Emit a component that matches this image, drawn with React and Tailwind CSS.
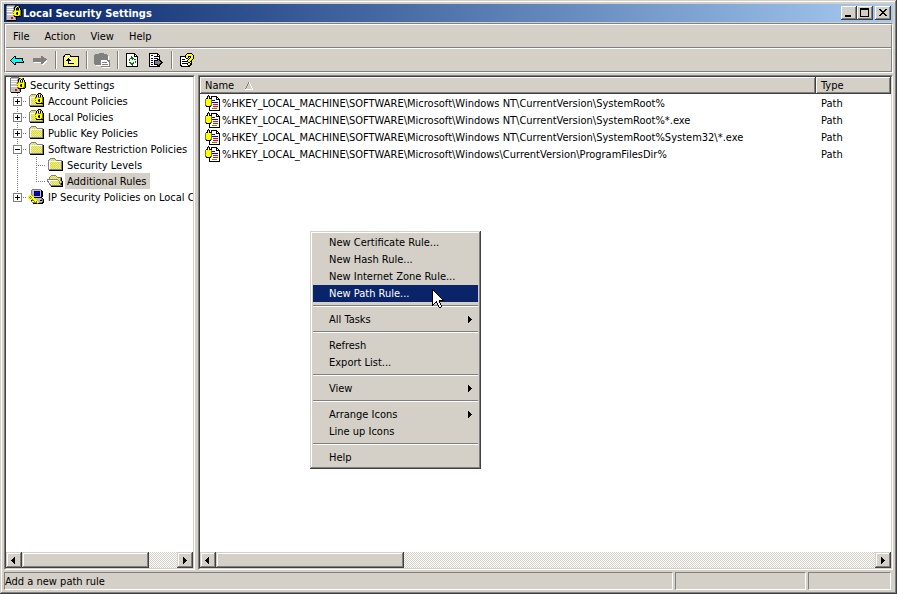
import { useState } from 'react';
import clsx from 'clsx';

const PALETTE = {
  k: '#000000',
  g: '#808080',
  l: '#c0c0c0',
  w: '#ffffff',
  y: '#ffff00',
  o: '#808000',
  r: '#ff0000',
  b: '#0000ff',
  n: '#000080',
  c: '#00ffff',
  e: '#008000',
};

// 'd', 'a' and 'f' are dithered fills: yellow on grey in both phases, yellow on white
function pixelColor(ch, x, y) {
  const odd = (x + y) % 2 === 1;
  if (ch === 'd') return odd ? '#ffff00' : '#c8c8c8';
  if (ch === 'a') return odd ? '#c8c8c8' : '#ffff00';
  if (ch === 'f') return odd ? '#ffff00' : '#ffffff';
  return PALETTE[ch];
}

function PixelIcon({ rows, className }) {
  const width = Math.max(...rows.map((r) => r.length));
  return (
    <svg
      width={width}
      height={rows.length}
      viewBox={`0 0 ${width} ${rows.length}`}
      shapeRendering="crispEdges"
      className={clsx('block shrink-0', className)}
      aria-hidden
    >
      {rows.flatMap((row, y) =>
        [...row].map((ch, x) => {
          const fill = pixelColor(ch, x, y);
          return fill ? (
            <rect key={`${x}-${y}`} x={x} y={y} width="1" height="1" fill={fill} />
          ) : null;
        })
      )}
    </svg>
  );
}

const ICONS = {
  server: [
    '.gggggggg.......',
    'glllllllgkoyok..',
    'gwwwwwwlkoykok..',
    'gllllllgkyk.kyk.',
    'gwwwwwwlkyk.kyk.',
    'gllllllooyoooyok',
    'gwwwwwloyyyyyyok',
    'gllllllyyyokyyok',
    'glllllloyykkyyok',
    'gwwwwwwyyyokyyok',
    'gllllllooyyyyook',
    'glllllllkkkkkkk.',
    'gllllrrllgk.....',
    'gllllrrllgk.....',
    'glllllllllk.....',
    '.kkkkkkkkk......',
  ],
  lockFolder: [
    '..........kkk...',
    '...ggggg.koyok..',
    '..gdddddkyk.kyk.',
    '.gddddddkyk.kyk.',
    '.gwwwwwooyoooyok',
    '.gwddddoyyyyyyok',
    '.gwddddyyyokyyok',
    '.gwddddoyykkyyok',
    '.gwddddyyyokyyok',
    '.gwddddooyyyyook',
    '.gwdddddkkkkkkkk',
    '.gwdddddddddddgk',
    '.ggggggggggggggk',
    '..kkkkkkkkkkkkkk',
    '................',
    '................',
  ],
  folder: [
    '................',
    '...ggggg........',
    '..gaaaaag.......',
    '.gaaaaaaagggggg.',
    '.gwwwwwwwwwwwwgk',
    '.gwaaaaaaaaaaagk',
    '.gwaaaaaaaaaaagk',
    '.gwaaaaaaaaaaagk',
    '.gwaaaaaaaaaaagk',
    '.gwaaaaaaaaaaagk',
    '.gwaaaaaaaaaaagk',
    '.gwaaaaaaaaaaagk',
    '.ggggggggggggggk',
    '..kkkkkkkkkkkkkk',
    '................',
    '................',
  ],
  openFolder: [
    '................',
    '................',
    '....ggggg.......',
    '...gdddddg......',
    '..gdddddddggggg.',
    '..gddddddddddgk.',
    'gggggggggggddgk.',
    'gwwwwwwwwwwgdgk.',
    'ggwdddddddddgdgk',
    '.gwdddddddddgdgk',
    '..gwddddddddggkk',
    '..ggwddddddddgkk',
    '...ggggggggggggk',
    '....kkkkkkkkkkkk',
    '................',
    '................',
  ],
  ipsec: [
    '....ggggggggg...',
    '...glllllllllk..',
    '...gllnnnnnnlkk.',
    '...gllnbbbbnlkk.',
    '...gllnbnnnnlkk.',
    '...gllnnnnnnlkk.',
    '.yyyglnnnnnnlkk.',
    'yyoyyllllllllkk.',
    'yo.oyykkkkkkkk..',
    'yyoyyyyllllllgk.',
    '.yyyoyyylllllggk',
    '...kooyyylllkkgk',
    '...gwwoyoyllllgk',
    '....ggggoyygggkk',
    '.....kkkkokkkkk.',
    '................',
  ],
  rule: [
    '...k............',
    '..kok.kkkkkk....',
    '..k.k.kwwwwkk...',
    '.kk.kkkwwwwkwk..',
    'oyyyyyowwwwkkkk.',
    'oydydyobbbwwwwk.',
    'oyydyyowwwwwwwk.',
    'oydydyobbbbbbwk.',
    'oyydyyowwwwwwwk.',
    'oydydyowrrrrrwk.',
    'ooyyyoowwwwwwwk.',
    '.kkkkkwwrrrrrwk.',
    '....kwwwwwwwwwk.',
    '....kwwooooowwk.',
    '....kwwwwwwwwwk.',
    '....kkkkkkkkkkk.',
  ],
  back: [
    '.....kk........',
    '....kck........',
    '...kcckkkkkkkk.',
    '..kcccccccccck.',
    '.kccccccccccck.',
    '..kccccccccccck',
    '...kcckkkkkkkkk',
    '....kck........',
    '.....kk........',
  ],
  forward: [
    '.........gg....',
    '.........ggg...',
    '.ggggggggggggg.',
    '.gggggggggggggg',
    '.gggggggggggggw',
    '.ggggggggggggww',
    '..wwwwwwwgggww.',
    '.........ggww..',
    '..........ww...',
  ],
  upFolder: [
    '..kkkkk.........',
    '.kfffffk........',
    'kkfffffkkkkkkkkk',
    'kffffffffffffffk',
    'kffffkfffffffffk',
    'kfffkkkffffffffk',
    'kffkkkkkfffffffk',
    'kffffkfffffffffk',
    'kffffkfffffffffk',
    'kffffkkkkkkffffk',
    'kffffffffffffffk',
    'kffffffffffffffk',
    'kkkkkkkkkkkkkkkk',
  ],
  paste: [
    '.....ggggg......',
    '.gggggggggggg...',
    'gggggggggggggg..',
    'ggggggggggggggw.',
    'ggggggggggggggw.',
    'ggggggggggggggw.',
    'ggggggggggggggw.',
    'gggggggwwwwwwggg',
    'gggggggwwwwwwwgg',
    'gggggggwgggggwwg',
    'gggggggwwwwwwwwg',
    '.ggggggwggggggwg',
    '..wwwwwwwwwwwwwg',
    '.......ggggggggg',
    '........wwwwwwww',
  ],
  refresh: [
    '.kkkkkkkkk...',
    '.kwwwwwwwkk..',
    '.kwwwwwwwkwk.',
    '.kwwwwewwkkkk',
    '.kwwwweewwwwk',
    '.kwwweeeewwwk',
    '.kwwewweweewk',
    '.kwwewwwwwwwk',
    '.kwwwwwwwwewk',
    '.kwweewwewewk',
    '.kwwweeeewwwk',
    '.kwwwweewwwwk',
    '.kwwwwwewwwwk',
    '.kkkkkkkkkkkk',
  ],
  exportList: [
    '.kkkkkkkkk.....',
    '.kwwwwwwwkk....',
    '.kwnnwwwwkwk...',
    '.kwwwwkkkkkk...',
    '.kwwwwwwwwwk...',
    '.kwnnwnnnkwk...',
    '.kwwwwwwwkkk...',
    '.kwnnwkkkkgkk..',
    '.kwwwwkgggggkk.',
    '.kwnnwkggggggkk',
    '.kwwwwkgggggkk.',
    '.kwnnwkkkkgkk..',
    '.kwwwwwwwkkk...',
    '.kkkkkkkkkkk...',
  ],
  help: [
    '........kkkkk..',
    '.......kyyyyyk.',
    '......kyyyyyyyk',
    '.kkkkkkyykkkyyk',
    '.kwwwwkyyk.kyyk',
    '.kwwwwwkk.kyyyk',
    '.kwkkkwwwkyyyk.',
    '.kwwwwwwkyyyk..',
    '.kwkkkkkkyykk..',
    '.kwwwwwwwkkwk..',
    '.kwkkkkkkyykk..',
    '.kwwwwwwkyykk..',
    '.kkwwwwwwkkk...',
    '..kkkkkkkkk....',
  ],
  sortUp: [
    '....gw....',
    '....gw....',
    '...g..w...',
    '...g..w...',
    '..g....w..',
    '..g....w..',
    '.g......w.',
    '.wwwwwwww.',
  ],
  left: ['...k', '..kk', '.kkk', 'kkkk', '.kkk', '..kk', '...k'],
  right: ['k...', 'kk..', 'kkk.', 'kkkk', 'kkk.', 'kk..', 'k...'],
  minimize: ['.........', '.........', '.........', '.........', '.........', '.........', '.kkkkkk..', '.kkkkkk..'],
  maximize: [
    'kkkkkkkkk',
    'kkkkkkkkk',
    'k.......k',
    'k.......k',
    'k.......k',
    'k.......k',
    'k.......k',
    'k.......k',
    'kkkkkkkkk',
  ],
  close: ['kk....kk', '.kk..kk.', '..kkkk..', '...kk...', '..kkkk..', '.kk..kk.', 'kk....kk'],
  pointer: [
    'k...........',
    'kk..........',
    'kwk.........',
    'kwwk........',
    'kwwwk.......',
    'kwwwwk......',
    'kwwwwwk.....',
    'kwwwwwwk....',
    'kwwwwwwwk...',
    'kwwwwwwwwk..',
    'kwwwwwwwwwk.',
    'kwwwwwwkkkkk',
    'kwwwkwwk....',
    'kwwkkwwk....',
    'kwk..kwwk...',
    'kk...kwwk...',
    'k.....kwwk..',
    '......kwwk..',
    '.......kk...',
  ],
};

const MENUS = ['File', 'Action', 'View', 'Help'];

const TOOLBAR = [
  [
    { icon: 'back', label: 'Back' },
    { icon: 'forward', label: 'Forward', disabled: true },
  ],
  [{ icon: 'upFolder', label: 'Up one level' }],
  [{ icon: 'paste', label: 'Paste', disabled: true }],
  [
    { icon: 'refresh', label: 'Refresh' },
    { icon: 'exportList', label: 'Export List' },
  ],
  [{ icon: 'help', label: 'Help' }],
];

// guides: one cell per indent level
const TREE = [
  { label: 'Security Settings', icon: 'server', guides: [] },
  { label: 'Account Policies', icon: 'lockFolder', guides: ['plus'] },
  { label: 'Local Policies', icon: 'lockFolder', guides: ['plus'] },
  { label: 'Public Key Policies', icon: 'folder', guides: ['plus'] },
  { label: 'Software Restriction Policies', icon: 'folder', guides: ['minus'] },
  { label: 'Security Levels', icon: 'folder', guides: ['line', 'tee'] },
  { label: 'Additional Rules', icon: 'openFolder', guides: ['line', 'elbow'] },
  { label: 'IP Security Policies on Local Computer', icon: 'ipsec', guides: ['plusLast'] },
];

const RULES = [
  '%HKEY_LOCAL_MACHINE\\SOFTWARE\\Microsoft\\Windows NT\\CurrentVersion\\SystemRoot%',
  '%HKEY_LOCAL_MACHINE\\SOFTWARE\\Microsoft\\Windows NT\\CurrentVersion\\SystemRoot%*.exe',
  '%HKEY_LOCAL_MACHINE\\SOFTWARE\\Microsoft\\Windows NT\\CurrentVersion\\SystemRoot%System32\\*.exe',
  '%HKEY_LOCAL_MACHINE\\SOFTWARE\\Microsoft\\Windows\\CurrentVersion\\ProgramFilesDir%',
];

const CONTEXT_MENU = [
  [
    { label: 'New Certificate Rule...' },
    { label: 'New Hash Rule...' },
    { label: 'New Internet Zone Rule...' },
    { label: 'New Path Rule...', active: true },
  ],
  [{ label: 'All Tasks', submenu: true }],
  [{ label: 'Refresh' }, { label: 'Export List...' }],
  [{ label: 'View', submenu: true }],
  [{ label: 'Arrange Icons', submenu: true }, { label: 'Line up Icons' }],
  [{ label: 'Help' }],
];

const raised =
  'bg-[#d4d0c8] shadow-[inset_-1px_-1px_#404040,inset_1px_1px_#d4d0c8,inset_-2px_-2px_#808080,inset_2px_2px_#ffffff]';
const raisedButton =
  'bg-[#d4d0c8] shadow-[inset_-1px_-1px_#404040,inset_1px_1px_#ffffff,inset_-2px_-2px_#808080]';
const groove = 'border border-t-[#808080] border-l-[#808080] border-r-white border-b-white';

function CaptionButton({ icon, label, className }) {
  return (
    <button
      type="button"
      aria-label={label}
      className={clsx('flex h-3.5 w-4 items-center justify-center pr-px pb-px', raisedButton, className)}
    >
      <PixelIcon rows={ICONS[icon]} />
    </button>
  );
}

function TitleBar() {
  return (
    <header className="flex h-[18px] items-center bg-linear-to-r from-[#0a246a] to-[#a6caf0] px-0.5">
      <PixelIcon rows={ICONS.server} />
      <h1 className="ml-px flex-1 text-[11px] font-bold text-white">Local Security Settings</h1>
      <CaptionButton icon="minimize" label="Minimize" />
      <CaptionButton icon="maximize" label="Maximize" />
      <CaptionButton icon="close" label="Close" className="ml-0.5" />
    </header>
  );
}

function MenuBar() {
  return (
    <nav className="flex h-[22px] items-center gap-px">
      {MENUS.map((m) => (
        <button key={m} type="button" className="px-[7px]">
          {m}
        </button>
      ))}
    </nav>
  );
}

function Toolbar() {
  return (
    <div role="toolbar" aria-label="Standard" className="flex h-[22px] items-center">
      {TOOLBAR.map((group, i) => (
        <div key={i} className="flex items-center">
          {i > 0 && <span className="mx-[3px] h-[18px] w-0.5 border-r border-l border-r-white border-l-[#808080]" />}
          {group.map((b) => (
            <button
              key={b.icon}
              type="button"
              aria-label={b.label}
              disabled={b.disabled}
              className="flex h-[22px] w-[23px] items-center pl-[3px]"
            >
              <PixelIcon rows={ICONS[b.icon]} />
            </button>
          ))}
        </div>
      ))}
    </div>
  );
}

function Guide({ kind }) {
  const box = kind.startsWith('plus') || kind === 'minus';
  const last = kind === 'elbow' || kind === 'plusLast';
  const drawing = (
    <svg width="19" height="16" viewBox="0 0 19 16" shapeRendering="crispEdges" className="block" aria-hidden>
      <g stroke="#808080" strokeDasharray="1 1">
        <path d={last ? 'M9.5 0V8' : 'M9.5 0V16'} />
        {kind !== 'line' && <path d="M9 8.5H19" />}
      </g>
      {box && (
        <>
          <rect x="5.5" y="4.5" width="8" height="8" fill="#fff" stroke="#808080" />
          <path d={kind === 'minus' ? 'M7 8.5h5' : 'M7 8.5h5M9.5 6v5'} stroke="#000" />
        </>
      )}
    </svg>
  );
  if (!box) return <span className="shrink-0">{drawing}</span>;
  return (
    <button type="button" aria-label={kind === 'minus' ? 'Collapse' : 'Expand'} className="shrink-0">
      {drawing}
    </button>
  );
}

function ScrollBar({ label, thumb }) {
  return (
    <div
      role="group"
      aria-label={label}
      className="flex h-4 shrink-0 bg-[conic-gradient(#ffffff_25%,#d4d0c8_0_50%,#ffffff_0_75%,#d4d0c8_0)] bg-[length:2px_2px]"
    >
      <button type="button" aria-label="Scroll left" className={clsx('flex w-4 items-center pl-[5px]', raised)}>
        <PixelIcon rows={ICONS.left} />
      </button>
      <div className="flex-1">
        <div className={clsx('h-4', raised, thumb)} />
      </div>
      <button type="button" aria-label="Scroll right" className={clsx('flex w-4 items-center justify-center', raised)}>
        <PixelIcon rows={ICONS.right} />
      </button>
    </div>
  );
}

function Pane({ className, children }) {
  return (
    <div className={clsx('flex min-w-0 flex-col', groove, className)}>
      <div className="flex min-h-0 flex-1 flex-col border border-t-[#404040] border-r-[#d4d0c8] border-b-[#d4d0c8] border-l-[#404040] bg-white">
        {children}
      </div>
    </div>
  );
}

function Tree({ selected, onSelect }) {
  return (
    <Pane className="w-[191px] shrink-0">
      <ul className="min-h-0 flex-1 overflow-hidden">
        {TREE.map((node) => (
          <li key={node.label} className={clsx('flex h-4 items-center', node.guides.length ? 'pl-0.5' : 'pl-[3px]')}>
            {node.guides.map((g, i) => (
              <Guide key={i} kind={g} />
            ))}
            <PixelIcon rows={ICONS[node.icon]} className="ml-px" />
            <button
              type="button"
              onClick={() => onSelect(node.label)}
              className={clsx(
                'ml-0.5 flex h-4 items-center pr-1 pl-0.5 whitespace-nowrap',
                selected === node.label && 'bg-[#d4d0c8]'
              )}
            >
              {node.label}
            </button>
          </li>
        ))}
      </ul>
      <ScrollBar label="Tree scroll" thumb="w-[82%]" />
    </Pane>
  );
}

function RuleList() {
  return (
    <Pane className="flex-1">
      <div className="min-h-0 flex-1 overflow-hidden">
        <table className="w-full table-fixed border-collapse text-left">
          <thead>
            <tr className="h-[17px]">
              <th scope="col" className={clsx('p-0 pl-[5px] font-normal', raisedButton)}>
                <span className="flex items-center gap-2.5">
                  Name
                  <PixelIcon rows={ICONS.sortUp} />
                </span>
              </th>
              <th scope="col" className={clsx('w-[75px] p-0 pl-[5px] font-normal', raisedButton)}>
                Type
              </th>
            </tr>
          </thead>
          <tbody>
            {RULES.map((rule) => (
              <tr key={rule} className="h-[17px]">
                <td className="p-0 pt-px pl-[5px]">
                  <span className="flex items-center gap-px whitespace-nowrap">
                    <PixelIcon rows={ICONS.rule} />
                    {rule}
                  </span>
                </td>
                <td className="p-0 pt-0.5 pl-[5px]">Path</td>
              </tr>
            ))}
          </tbody>
        </table>
      </div>
      <ScrollBar label="List scroll" thumb="w-[28.5%]" />
    </Pane>
  );
}

function ContextMenu() {
  return (
    <div role="menu" className={clsx('absolute top-[231px] left-[310px] w-[171px] p-[3px]', raised)}>
      {CONTEXT_MENU.map((group, i) => (
        <div key={i}>
          {i > 0 && <hr className="mt-[3px] mb-1 h-0.5 border-t border-b border-t-[#808080] border-b-white" />}
          {group.map((item) => (
            <button
              key={item.label}
              type="button"
              role="menuitem"
              className={clsx(
                'relative flex h-[17px] w-full items-center justify-between pr-1.5 pl-4',
                item.active && 'bg-[#0a246a] text-white'
              )}
            >
              {item.label}
              {item.submenu && <PixelIcon rows={ICONS.right} />}
              {item.active && <PixelIcon rows={ICONS.pointer} className="absolute top-1 left-[119px] z-10" />}
            </button>
          ))}
        </div>
      ))}
    </div>
  );
}

function StatusBar() {
  return (
    <footer className="mt-0.5 flex h-[18px] gap-0.5">
      <div className={clsx('flex flex-1 items-center', groove)}>Add a new path rule</div>
      <div className={clsx('w-[131px]', groove)} />
      <div className={clsx('mr-0.5 w-[83px]', groove)} />
    </footer>
  );
}

export default function App() {
  const [selected, setSelected] = useState('Additional Rules');

  return (
    <main className="relative flex h-screen flex-col overflow-hidden bg-[#d4d0c8] p-1 font-['DejaVu_Sans_Condensed','DejaVu_Sans',sans-serif] text-[11px] leading-none text-black shadow-[inset_-1px_-1px_#404040,inset_1px_1px_#d4d0c8,inset_-2px_-2px_#808080,inset_2px_2px_#ffffff]">
      <TitleBar />
      <div className="mt-px border border-t-[#808080] border-r-white border-b-white border-l-[#808080]">
        <div className="border border-t-white border-r-[#808080] border-b-[#808080] border-l-white">
          <MenuBar />
          <div className="h-0.5 border-t border-b border-t-[#808080] border-b-white" />
          <Toolbar />
        </div>
      </div>
      <div className="mt-0.5 flex min-h-0 flex-1 gap-[3px]">
        <Tree selected={selected} onSelect={setSelected} />
        <RuleList />
      </div>
      <StatusBar />
      <ContextMenu />
    </main>
  );
}
